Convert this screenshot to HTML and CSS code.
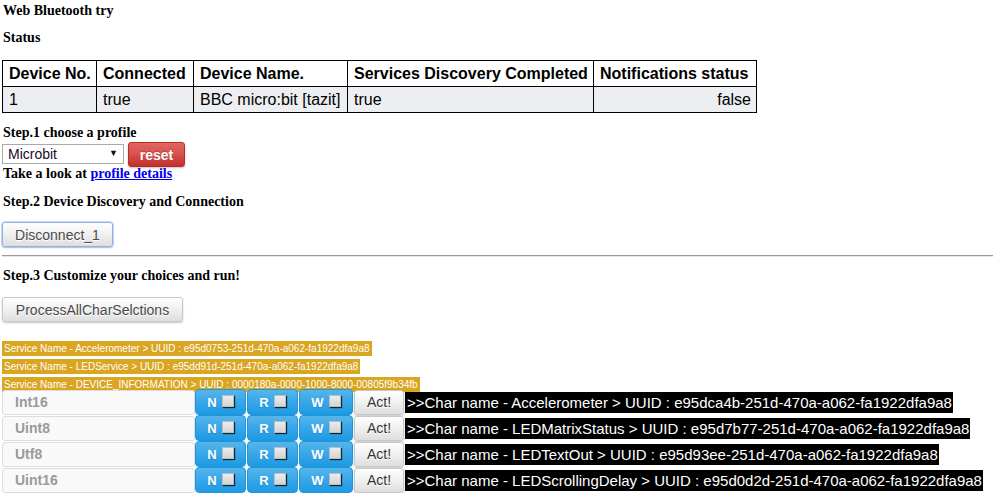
FILE: index.html
```html
<!DOCTYPE html>
<html>
<head>
<meta charset="utf-8">
<title>Web Bluetooth try</title>
<link rel="stylesheet" href="styles.css">
</head>
<body>
<div class="heading title">Web Bluetooth try</div>
<div class="heading status">Status</div>
<table class="status-table">
  <thead>
    <tr>
      <th class="c1">Device No.</th>
      <th class="c2">Connected</th>
      <th class="c3">Device Name.</th>
      <th class="c4">Services Discovery Completed</th>
      <th class="c5">Notifications status</th>
    </tr>
  </thead>
  <tbody>
    <tr>
      <td>1</td>
      <td>true</td>
      <td>BBC micro:bit [tazit]</td>
      <td>true</td>
      <td class="right">false</td>
    </tr>
  </tbody>
</table>

<div class="heading step1">Step.1 choose a profile</div>
<div class="profile-row">
  <div class="select-wrap">
    <select class="profile-select"><option>Microbit</option></select>
    <span class="select-arrow">▼</span>
  </div>
  <button class="btn btn-danger">reset</button>
</div>
<div class="heading look">Take a look at <a href="#">profile details</a></div>

<div class="heading step2">Step.2 Device Discovery and Connection</div>
<div class="btn-line"><button class="btn btn-default btn-focus">Disconnect_1</button></div>
<hr class="sep">

<div class="heading step3">Step.3 Customize your choices and run!</div>
<div class="btn-line"><button class="btn btn-default">ProcessAllCharSelctions</button></div>

<div class="services">
  <div><span class="svc">Service Name - Accelerometer &gt; UUID : e95d0753-251d-470a-a062-fa1922dfa9a8</span></div>
  <div><span class="svc">Service Name - LEDService &gt; UUID : e95dd91d-251d-470a-a062-fa1922dfa9a8</span></div>
  <div><span class="svc">Service Name - DEVICE_INFORMATION &gt; UUID : 0000180a-0000-1000-8000-00805f9b34fb</span></div>
</div>

<div class="chars">
  <div class="char-row">
    <div class="type-box">Int16</div>
    <label class="bbtn bbtn-n">N<span class="chk"></span></label>
    <label class="bbtn bbtn-r">R<span class="chk"></span></label>
    <label class="bbtn bbtn-w">W<span class="chk"></span></label>
    <button class="btn btn-default act">Act!</button>
    <span class="char-label">&gt;&gt;Char name - Accelerometer &gt; UUID : e95dca4b-251d-470a-a062-fa1922dfa9a8</span>
  </div>
  <div class="char-row">
    <div class="type-box">Uint8</div>
    <label class="bbtn bbtn-n">N<span class="chk"></span></label>
    <label class="bbtn bbtn-r">R<span class="chk"></span></label>
    <label class="bbtn bbtn-w">W<span class="chk"></span></label>
    <button class="btn btn-default act">Act!</button>
    <span class="char-label">&gt;&gt;Char name - LEDMatrixStatus &gt; UUID : e95d7b77-251d-470a-a062-fa1922dfa9a8</span>
  </div>
  <div class="char-row">
    <div class="type-box">Utf8</div>
    <label class="bbtn bbtn-n">N<span class="chk"></span></label>
    <label class="bbtn bbtn-r">R<span class="chk"></span></label>
    <label class="bbtn bbtn-w">W<span class="chk"></span></label>
    <button class="btn btn-default act">Act!</button>
    <span class="char-label">&gt;&gt;Char name - LEDTextOut &gt; UUID : e95d93ee-251d-470a-a062-fa1922dfa9a8</span>
  </div>
  <div class="char-row">
    <div class="type-box">Uint16</div>
    <label class="bbtn bbtn-n">N<span class="chk"></span></label>
    <label class="bbtn bbtn-r">R<span class="chk"></span></label>
    <label class="bbtn bbtn-w">W<span class="chk"></span></label>
    <button class="btn btn-default act">Act!</button>
    <span class="char-label">&gt;&gt;Char name - LEDScrollingDelay &gt; UUID : e95d0d2d-251d-470a-a062-fa1922dfa9a8</span>
  </div>
</div>
</body>
</html>
```

FILE: styles.css
```css
html, body {
  margin: 0;
  padding: 0;
  background: #fff;
}
body {
  padding-left: 2px;
  font-family: "Liberation Sans", Arial, sans-serif;
  color: #000;
}
.heading {
  font-family: "Liberation Serif", "Times New Roman", serif;
  font-weight: bold;
  font-size: 14px;
  line-height: 16px;
  padding-left: 1px;
}
.title { margin-top: 3px; }
.status { margin-top: 11px; }

.status-table {
  margin-top: 14px;
  border-collapse: separate;
  border-spacing: 0;
  table-layout: fixed;
  width: 755px;
  border-top: 1px solid #000;
  border-left: 1px solid #000;
  font-size: 16px;
  line-height: 18px;
}
.status-table th,
.status-table td {
  box-sizing: border-box;
  border-right: 1px solid #000;
  border-bottom: 1px solid #000;
  padding: 4px 5px 3px 6px;
  text-align: left;
  white-space: nowrap;
}
.status-table th { font-weight: bold; background: #fff; }
.status-table td { background: #eceef1; }
.status-table td.right { text-align: right; }
.c1 { width: 94px; }
.c2 { width: 97px; }
.c3 { width: 154px; }
.c4 { width: 246px; }
.c5 { width: 163px; }

.step1 { margin-top: 12px; }
.profile-row {
  display: flex;
  align-items: flex-start;
  height: 24px;
  margin-top: 0;
}
.select-wrap {
  position: relative;
  margin-top: 3px;
  width: 122px;
  height: 20px;
}
.profile-select {
  -webkit-appearance: none;
  appearance: none;
  box-sizing: border-box;
  width: 122px;
  height: 20px;
  margin: 0;
  border: 1px solid #a9a9a9;
  border-radius: 0;
  background: #fff;
  padding: 0 0 0 5px;
  font-family: "Liberation Sans", Arial, sans-serif;
  font-size: 14px;
  color: #1a0a2a;
}
.select-arrow {
  position: absolute;
  right: 6px;
  top: 4px;
  font-size: 9px;
  line-height: 10px;
  color: #111;
  pointer-events: none;
}

.btn {
  box-sizing: border-box;
  font-family: "Liberation Sans", Arial, sans-serif;
  font-size: 14px;
  line-height: 16px;
  margin: 0;
  cursor: pointer;
  border-radius: 3px;
}
.btn-danger {
  margin-left: 4px;
  margin-top: 1px;
  height: 25px;
  width: 57px;
  padding: 0;
  color: #fff;
  font-weight: bold;
  border: 1px solid #b92c28;
  background: linear-gradient(#e06561, #d9534f 45%, #c12e2a);
  box-shadow: 0 1px 2px rgba(0,0,0,.25);
  text-shadow: 0 -1px 0 rgba(0,0,0,.2);
}
.btn-default {
  height: 25px;
  padding: 0 12px;
  color: #4a4a4a;
  border: 1px solid #c8c8c8;
  background: linear-gradient(#fefefe, #f0f0f0 50%, #dedede);
  box-shadow: 0 1px 2px rgba(0,0,0,.22);
  text-shadow: 0 1px 0 #fff;
}
.btn-focus {
  border-color: #8cb3e6;
  box-shadow: 0 0 0 1px rgba(120,160,225,.35), 0 1px 2px rgba(0,0,0,.2);
}
.look { margin-top: 1px; }
.look a { color: #0000ee; text-decoration: underline; }

.step2 { margin-top: 12px; }
.btn-line { margin-top: 12px; height: 25px; display: flex; }
.btn-line .btn { width: 111px; padding: 0; }
.sep {
  margin: 8px 0 0 0;
  border: 0;
  border-top: 1px solid #9a9a9a;
  border-bottom: 1px solid #e6e6e6;
  height: 0;
}
.step3 { margin-top: 11px; }
.step3 + .btn-line { margin-top: 13px; }
.step3 + .btn-line .btn { width: 181px; }

.services { margin-top: 16px; }
.services > div { height: 15px; margin-bottom: 3px; }
.services > div:last-child { margin-bottom: 0; }
.svc {
  display: inline-block;
  background: #daa520;
  color: #fff;
  font-size: 10px;
  line-height: 15px;
  height: 15px;
  padding: 0 2px 0 2px;
  white-space: nowrap;
}

.char-row {
  display: flex;
  align-items: center;
  height: 26px;
}
.char-row > * { flex-shrink: 0; }
.type-box {
  box-sizing: border-box;
  width: 193px;
  height: 25px;
  border: 1px solid #dcdcdc;
  border-radius: 3px;
  background: #f9f9f9;
  color: #9a9a9a;
  font-weight: bold;
  font-size: 14px;
  line-height: 23px;
  padding-left: 12px;
}
.bbtn {
  box-sizing: border-box;
  display: flex;
  align-items: center;
  justify-content: center;
  gap: 5px;
  height: 26px;
  width: 51px;
  margin-right: 1px;
  border-radius: 4px;
  border: 1px solid #1d97dc;
  background: linear-gradient(#56b5ec, #35a5e8 55%, #1f9ae2);
  color: #fff;
  font-weight: bold;
  font-size: 13px;
  text-shadow: 0 1px 1px rgba(0,0,0,.15);
}
.bbtn-w { width: 54px; }
.chk {
  box-sizing: border-box;
  display: inline-block;
  width: 12px;
  height: 12px;
  background: linear-gradient(#ececec, #d4d4d4);
  border: 1px solid #bdbdbd;
  box-shadow: 1px 1px 1px rgba(0,0,0,.75);
  margin-top: -2px;
}
.act {
  width: 50px;
  height: 25px;
  padding: 0;
  margin-left: 0;
  color: #333;
}
.char-label {
  margin-left: 1px;
  background: #000;
  color: #fff;
  font-size: 15px;
  line-height: 21px;
  padding: 0 1px 0 2px;
  white-space: nowrap;
}
```
